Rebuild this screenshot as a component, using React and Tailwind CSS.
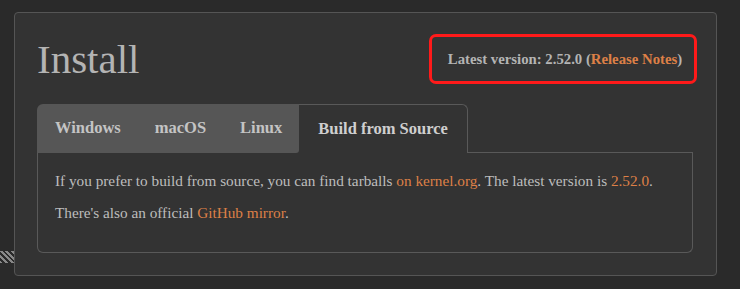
const TABS = ['Windows', 'macOS', 'Linux']

function App() {
  return (
    <div
      className="relative min-h-[289px] w-[740px] bg-[#2a2a2a] pt-3 pl-[14px]"
      style={{ fontFamily: '"Liberation Serif", Georgia, serif' }}
    >
      {/* hatched strip at the left edge */}
      <div className="absolute left-0 top-[251px] h-[12px] w-[14px] bg-[repeating-linear-gradient(45deg,#888_0px,#888_2px,transparent_2px,transparent_4px)]" />

      <div className="w-[703px] h-[264px] rounded-[4px] border border-[#555] bg-[#333] px-[22px] pt-[20px]">
        <div className="flex items-start justify-between">
          <h1 className="text-[41px] leading-[48px] text-[#b4b4b4] pt-[2px]">Install</h1>
          <div className="mr-[-3px] mt-[1px] flex h-[50px] w-[268px] items-center justify-center rounded-[7px] border-[3px] border-[#ff1a1a] pl-[4px] text-[14.75px] font-bold text-[#b4b4b4]">
            <span>
              Latest version: 2.52.0 (
              <span className="text-[#dd8047]">Release Notes</span>)
            </span>
          </div>
        </div>

        <div className="mt-[20px] w-[656px]">
          <div className="flex h-[49px]">
            <div className="flex items-center gap-[34px] rounded-tl-[6px] rounded-br-[3px] bg-[#565656] pl-[18px] pr-[17px] text-[16.5px] font-bold text-[#c4c4c4]">
              {TABS.map(t => (
                <span key={t}>{t}</span>
              ))}
            </div>
            <div className="flex items-center rounded-tr-[6px] border-t border-r border-[#595959] bg-[#333] pl-[19px] pr-[19px] text-[16.5px] font-bold text-[#cfcfcf]">
              Build from Source
            </div>
            <div className="flex-1 border-b border-[#595959]" />
          </div>
          <div className="h-[100px] rounded-b-[6px] border border-t-0 border-[#595959] px-[17px] pt-[18px] text-[15.25px] text-[#bdbdbd]">
            <p className="leading-[20px]">
              If you prefer to build from source, you can find tarballs{' '}
              <span className="text-[#dd8047]">on kernel.org</span>. The latest version is{' '}
              <span className="text-[#dd8047]">2.52.0</span>.
            </p>
            <p className="mt-[12px] leading-[20px]">
              There's also an official <span className="text-[#dd8047]">GitHub mirror</span>.
            </p>
          </div>
        </div>
      </div>
    </div>
  )
}

export default App
